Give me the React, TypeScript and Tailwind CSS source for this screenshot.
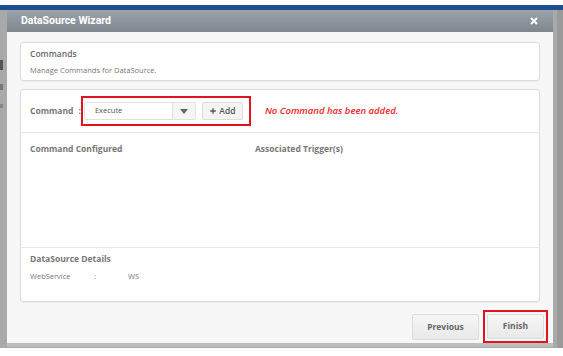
import { Plus, X } from "lucide-react";

function Panel({ className, children }: { className?: string; children: React.ReactNode }) {
  return (
    <div className={"rounded-[3px] border border-[#dcdcdc] bg-white shadow-[0_1px_1px_rgba(0,0,0,0.04)] " + (className ?? "")}>
      {children}
    </div>
  );
}

export default function App() {
  return (
    <div className="relative h-[356px] w-[563px] overflow-hidden bg-white font-['Open_Sans',sans-serif]">
      {/* dimmed page behind the modal */}
      <div className="h-[5px] bg-white" />
      <div className="h-[5px] bg-[#1d4f8f]" />
      <div className="flex h-[338px] bg-[#a9a9a9]">
        <div className="flex w-[7px] flex-col gap-[14px] pt-[50px]">
          <div className="h-[10px] w-[3px] bg-[#555]" />
          <div className="h-[6px] w-[3px] bg-[#777]" />
          <div className="h-[4px] w-[3px] bg-[#888]" />
        </div>
        <div className="flex-1" />
        <div className="w-[6px] bg-[#9a9a9a]" />
      </div>

      {/* modal */}
      <div className="absolute left-[7px] top-[10px] flex h-[333px] w-[546px] flex-col bg-[#f7f7f7] shadow-[0_4px_0_#bdbdbd]">
        <div className="flex h-[23px] items-center justify-between bg-gradient-to-b from-[#9da3ab] to-[#80868e] px-[14px]">
          <span className="font-['Roboto',sans-serif] text-[10.5px] font-bold text-white">DataSource Wizard</span>
          <X className="h-[10px] w-[10px] text-white" strokeWidth={4.5} />
        </div>

        <div className="flex flex-1 flex-col gap-[8px] px-[13px] pt-[10px]">
          <Panel className="h-[39px] px-[9px] pt-[5px]">
            <div className="text-[8.5px] font-semibold text-[#666]">Commands</div>
            <div className="mt-[4px] text-[7.5px] text-[#777]">Manage Commands for DataSource.</div>
          </Panel>

          <Panel className="flex h-[213px] flex-col">
            <div className="flex h-[43px] items-center border-b border-[#e6e6e8] pl-[9px]">
              <span className="text-[8.5px] font-bold text-[#777]">Command</span>
              <span className="ml-[5px] text-[8.5px] font-bold text-[#777]">:</span>
              <div className="ml-[0px] flex h-[30px] w-[170px] items-center gap-[6px] border-[2px] border-[#e0141e] px-[1px]">
                <div className="flex h-[18px] w-[112px] items-stretch rounded-[2px] border border-[#e2e2e2] bg-white">
                  <span className="flex flex-1 items-center pl-[10px] text-[7.5px] text-[#555]">Execute</span>
                  <span className="flex w-[23px] items-center justify-center border-l border-[#e0e0e0] bg-[#f5f5f5]">
                    <svg width="8" height="5" viewBox="0 0 8 5"><path d="M0 0h8L4 5z" fill="#666" /></svg>
                  </span>
                </div>
                <div className="flex h-[18px] w-[41px] items-center justify-center gap-[2px] rounded-[2px] border border-[#dedede] bg-[#f4f4f4] text-[8.5px] font-semibold text-[#555]">
                  <Plus className="h-[8px] w-[8px]" strokeWidth={4} />
                  <span>Add</span>
                </div>
              </div>
              <span className="ml-[14px] text-[9.5px] font-semibold italic text-[#ee1c1c]">No Command has been added.</span>
            </div>

            <div className="flex h-[115px] border-b border-[#e6e6e8] pl-[9px] pt-[10px]">
              <span className="w-[225px] text-[8.5px] font-bold text-[#777]">Command Configured</span>
              <span className="text-[8.5px] font-bold text-[#777]">Associated Trigger(s)</span>
            </div>

            <div className="pl-[9px] pt-[5px]">
              <div className="text-[8.5px] font-bold text-[#777]">DataSource Details</div>
              <div className="mt-[5px] flex text-[7.5px] text-[#777]">
                <span className="w-[64px]">WebService</span>
                <span className="w-[34px]">:</span>
                <span>WS</span>
              </div>
            </div>
          </Panel>

          <div className="mr-[-8px] flex justify-end gap-[4px] pt-[0px]">
            <div className="mt-[4px] flex h-[26px] w-[67px] items-center justify-center rounded-[2px] border border-[#dcdcdc] bg-gradient-to-b from-[#f6f6f6] to-[#e9e9e9] text-[8.5px] font-bold text-[#666]">
              Previous
            </div>
            <div className="flex h-[33px] w-[65px] items-center justify-center border-[2px] border-[#e0141e] p-[2px]">
              <div className="flex h-full w-full items-center justify-center rounded-[2px] border border-[#dcdcdc] bg-gradient-to-b from-[#f6f6f6] to-[#e9e9e9] text-[8.5px] font-bold text-[#666]">
                Finish
              </div>
            </div>
          </div>
        </div>
      </div>
    </div>
  );
}
